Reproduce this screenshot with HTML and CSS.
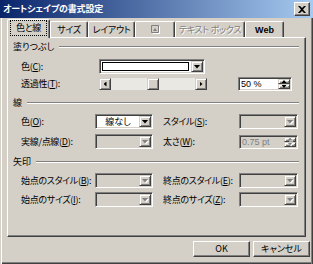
FILE: index.html
```html
<!DOCTYPE html>
<html lang="ja">
<head>
<meta charset="utf-8">
<title>オートシェイプの書式設定</title>
<link rel="stylesheet" href="styles.css">
</head>
<body>
<div class="window">
  <div class="titlebar">
    <span class="title">オートシェイプの書式設定</span>
    <span class="close"><svg width="8" height="7" viewBox="0 0 8 7"><path d="M0 0h2l2 2 2-2h2L5 3.5 8 7H6L4 5 2 7H0l3-3.5z" fill="#000"/></svg></span>
  </div>
  <div class="tabs">
    <div class="tab sel t1"><span class="focus">色と線</span></div>
    <div class="tab t2">サイズ</div>
    <div class="tab t3">レイアウト</div>
    <div class="tab t4 dis"><svg class="picicon" width="9" height="9" viewBox="0 0 9 9"><path d="M0.5 0.5h7v7h-7z" fill="none" stroke="#808080"/><path d="M1.5 8.5h7.5M8.5 1.5v7" stroke="#fff"/><path d="M2 6l2-3 2 3z" fill="#808080"/></svg></div>
    <div class="tab t5 dis">テキスト ボックス</div>
    <div class="tab t6">Web</div>
  </div>
  <div class="panel">
    <div class="ghead"><span>塗りつぶし</span><i class="etch"></i></div>
    <div class="grid fill">
      <span class="lbl">色(<u>C</u>):</span>
      <div class="field combo colorcombo">
        <span class="swatch"></span>
        <span class="abtn"><i class="tri"></i></span>
      </div>
      <span></span><span></span>
      <span class="lbl">透過性(<u>T</u>):</span>
      <div class="slider">
        <span class="sbtn"><i class="tri-l"></i></span>
        <span class="track"></span>
        <span class="thumb"></span>
        <span class="track"></span>
        <span class="sbtn"><i class="tri-r"></i></span>
      </div>
      <span></span>
      <div class="field spin">
        <span class="val">50 %</span>
        <span class="spinbtns"><span class="ub"><i class="tri-u"></i></span><span class="ub"><i class="tri-d"></i></span></span>
      </div>
    </div>

    <div class="ghead g2"><span>線</span><i class="etch"></i></div>
    <div class="grid two">
      <span class="lbl">色(<u>O</u>):</span>
      <div class="field combo"><span class="ctext">線なし</span><span class="abtn"><i class="tri"></i></span></div>
      <span></span>
      <span class="lbl">スタイル(<u>S</u>):</span>
      <div class="field combo off"><span class="ctext"></span><span class="abtn"><span class="triw"><i class="tri"></i></span></span></div>

      <span class="lbl">実線/点線(<u>D</u>):</span>
      <div class="field combo off"><span class="ctext"></span><span class="abtn"><span class="triw"><i class="tri"></i></span></span></div>
      <span></span>
      <span class="lbl">太さ(<u>W</u>):</span>
      <div class="field spin off">
        <span class="val">0.75 pt</span>
        <span class="spinbtns"><span class="ub"><span class="triw"><i class="tri-u"></i></span></span><span class="ub"><span class="triw"><i class="tri-d"></i></span></span></span>
      </div>
    </div>

    <div class="ghead g3"><span>矢印</span><i class="etch"></i></div>
    <div class="grid two arrows">
      <span class="lbl">始点のスタイル(<u>B</u>):</span>
      <div class="field combo off"><span class="ctext"></span><span class="abtn"><span class="triw"><i class="tri"></i></span></span></div>
      <span></span>
      <span class="lbl">終点のスタイル(<u>E</u>):</span>
      <div class="field combo off"><span class="ctext"></span><span class="abtn"><span class="triw"><i class="tri"></i></span></span></div>

      <span class="lbl">始点のサイズ(<u>I</u>):</span>
      <div class="field combo off"><span class="ctext"></span><span class="abtn"><span class="triw"><i class="tri"></i></span></span></div>
      <span></span>
      <span class="lbl">終点のサイズ(<u>Z</u>):</span>
      <div class="field combo off"><span class="ctext"></span><span class="abtn"><span class="triw"><i class="tri"></i></span></span></div>
    </div>
  </div>
  <div class="buttons">
    <span class="btn">OK</span>
    <span class="btn">キャンセル</span>
  </div>
</div>
</body>
</html>
```

FILE: styles.css
```css
html, body {
  margin: 0;
  padding: 0;
  background: #d4d0c8;
}
body {
  font-family: "Noto Sans CJK JP", "Noto Sans", sans-serif;
  font-size: 9px;
  font-feature-settings: "palt" 1;
  color: #000;
}
.window {
  width: 313px;
  height: 264px;
  box-sizing: border-box;
  padding: 0 3px 3px 3px;
  background: #d4d0c8;
  box-shadow: inset 1px 0 #d4d0c8, inset 2px 0 #fff, inset -1px 0 #404040, inset -2px 0 #808080, inset 0 -1px #404040, inset 0 -2px #808080;
  display: flex;
  flex-direction: column;
}
.titlebar {
  height: 18px;
  margin: 0 -3px;
  padding: 0 3px 0 3px;
  background: linear-gradient(to right, #0a246a, #a6caf0);
  display: flex;
  align-items: center;
  justify-content: space-between;
}
.title {
  color: #fff;
  font-weight: bold;
  font-size: 9px;
  letter-spacing: -0.2px;
  line-height: 14px;
}
.close {
  width: 16px;
  height: 14px;
  box-sizing: border-box;
  background: #d4d0c8;
  border: 1px solid;
  border-color: #fff #404040 #404040 #fff;
  box-shadow: inset -1px -1px #808080;
  display: flex;
  align-items: center;
  justify-content: center;
}
.tabs {
  height: 18px;
  margin: 1px 0 0 4px;
  display: flex;
  align-items: flex-end;
}
.tab {
  height: 16px;
  box-sizing: border-box;
  border-top: 1px solid #fff;
  border-left: 1px solid #fff;
  border-right: 1px solid #404040;
  box-shadow: inset -1px 0 #808080;
  border-radius: 2px 2px 0 0;
  display: flex;
  align-items: center;
  justify-content: center;
  line-height: 12px;
  white-space: nowrap;
  letter-spacing: -0.3px;
}
.tab.sel {
  height: 19px;
  margin-bottom: -1px;
  position: relative;
  z-index: 1;
  background: #d4d0c8;
  padding-bottom: 2px;
}
.t1 { width: 43px; }
.t2 { width: 38px; }
.t3 { width: 47px; }
.t4 { width: 40px; }
.t5 { width: 70px; }
.t6 {
  width: 39px;
  font-family: "Liberation Sans", Arial, sans-serif;
  font-weight: bold;
  letter-spacing: 0;
}
.dis {
  color: #808080;
  text-shadow: 1px 1px 0 #fff;
}
.focus {
  outline: 1px dotted #000;
  outline-offset: 1px;
  padding: 0 4px;
}
.panel {
  height: 200px;
  margin: 0 4px;
  box-sizing: border-box;
  border: 1px solid;
  border-color: #fff #404040 #404040 #fff;
  box-shadow: inset -1px -1px #808080;
  padding: 3px 6px 0 5px;
  display: flex;
  flex-direction: column;
}
.ghead {
  height: 12px;
  display: flex;
  align-items: center;
  gap: 5px;
  line-height: 12px;
}
.etch {
  flex: 1;
  height: 0;
  border-top: 1px solid #808080;
  border-bottom: 1px solid #fff;
}
.g2 { margin-top: 6px; }
.g3 { margin-top: 7px; }
.grid {
  display: grid;
  padding-left: 8px;
  align-items: center;
}
.fill {
  grid-template-columns: 78px 108px 31px 54px;
  grid-template-rows: 15px 14px;
  row-gap: 3px;
  margin-top: 6px;
}
.two {
  grid-template-columns: 74px 58px 10px 76px 59px;
  grid-template-rows: 15px 15px;
  row-gap: 5px;
  margin-top: 5px;
}
.arrows {
  row-gap: 4px;
}
.lbl {
  white-space: nowrap;
  line-height: 12px;
  letter-spacing: -0.3px;
}
.lbl u {
  text-decoration-thickness: 1px;
  text-underline-offset: 1px;
}
.field {
  box-sizing: border-box;
  height: 100%;
  border: 1px solid;
  border-color: #808080 #fff #fff #808080;
  box-shadow: inset 1px 1px #404040, inset -1px -1px #d4d0c8;
  padding: 1px;
  background: #fff;
  display: flex;
  align-items: stretch;
}
.field.off {
  background: #d4d0c8;
  color: #808080;
}
.colorcombo {
  width: 106px;
}
.swatch {
  flex: 1;
  margin: 1px 2px 1px 1px;
  border: 1px solid #000;
  background: #fff;
}
.ctext {
  flex: 1;
  display: flex;
  align-items: center;
  justify-content: center;
  line-height: 11px;
}
.abtn {
  width: 12px;
  flex: none;
  box-sizing: border-box;
  background: #d4d0c8;
  border: 1px solid;
  border-color: #d4d0c8 #404040 #404040 #d4d0c8;
  box-shadow: inset 1px 1px #fff, inset -1px -1px #808080;
  display: flex;
  align-items: center;
  justify-content: center;
}
.tri {
  display: block;
  width: 7px;
  height: 4px;
  background: #000;
  clip-path: polygon(0 0, 100% 0, 50% 100%);
}
.off .tri, .off .tri-u, .off .tri-d {
  background: #808080;
}
.triw {
  display: block;
  filter: drop-shadow(1px 1px 0 #fff);
}
.slider {
  height: 12px;
  width: 108px;
  display: flex;
}
.sbtn, .thumb {
  width: 12px;
  flex: none;
  box-sizing: border-box;
  background: #d4d0c8;
  border: 1px solid;
  border-color: #d4d0c8 #404040 #404040 #d4d0c8;
  box-shadow: inset 1px 1px #fff, inset -1px -1px #808080;
  display: flex;
  align-items: center;
  justify-content: center;
}
.track {
  flex: 1;
  background: #eae8e3;
}
.tri-l, .tri-r {
  display: block;
  width: 3px;
  height: 5px;
  background: #000;
}
.tri-l { clip-path: polygon(100% 0, 100% 100%, 0 50%); }
.tri-r { clip-path: polygon(0 0, 100% 50%, 0 100%); }
.spin {
  height: 14px;
}
.val {
  flex: 1;
  line-height: 10px;
  padding-left: 1px;
  display: flex;
  align-items: center;
  font-family: "Liberation Sans", Arial, sans-serif;
  font-size: 9px;
}
.spinbtns {
  width: 12px;
  flex: none;
  display: flex;
  flex-direction: column;
}
.ub {
  flex: 1;
  box-sizing: border-box;
  background: #d4d0c8;
  border: 1px solid;
  border-color: #d4d0c8 #404040 #404040 #d4d0c8;
  box-shadow: inset 1px 1px #fff, inset -1px -1px #808080;
  display: flex;
  align-items: center;
  justify-content: center;
}
.tri-u, .tri-d {
  display: block;
  width: 5px;
  height: 3px;
  background: #000;
}
.tri-u { clip-path: polygon(50% 0, 100% 100%, 0 100%); }
.tri-d { clip-path: polygon(0 0, 100% 0, 50% 100%); }
.buttons {
  display: flex;
  justify-content: flex-end;
  gap: 3px;
  margin-top: 4px;
}
.btn {
  width: 57px;
  height: 16px;
  box-sizing: border-box;
  border: 1px solid;
  border-color: #fff #404040 #404040 #fff;
  box-shadow: inset -1px -1px #808080;
  display: flex;
  align-items: center;
  justify-content: center;
  line-height: 12px;
}
```
